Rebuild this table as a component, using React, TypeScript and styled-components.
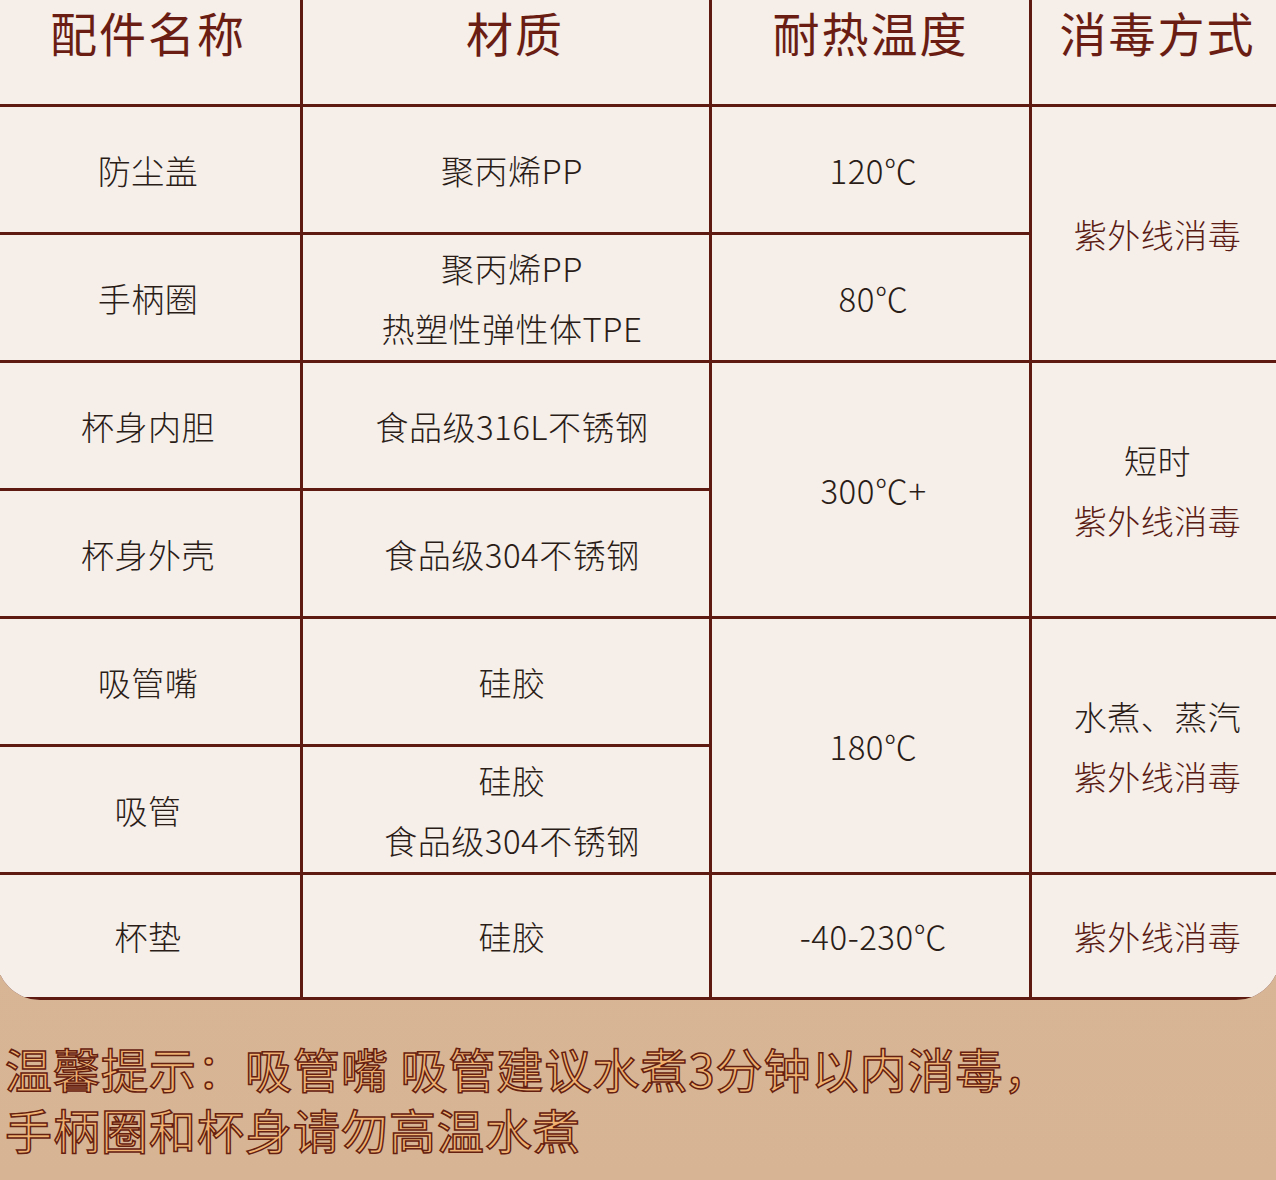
import React from "react";
import styled, { createGlobalStyle } from "styled-components";

const Global = createGlobalStyle`
  html, body { margin: 0; padding: 0; }
  body {
    background: #d8b796;
    font-family: "Noto Sans CJK SC", "Noto Sans", sans-serif;
  }
`;

const Page = styled.div`
  width: 1276px;
  height: 1180px;
  overflow: hidden;
  background: linear-gradient(180deg, #d9b999 0%, #d7b594 100%);
`;

const Table = styled.div`
  margin-left: -4px;
  width: 1284px;
  display: grid;
  grid-template-columns: 304px 406px 317px 251px;
  grid-template-rows: 104px repeat(6, 125px) 122px;
  gap: 3px;
  background: #5e1a10;
  padding-bottom: 3px;
  border-radius: 0 0 44px 44px;
  overflow: hidden;
`;

const Cell = styled.div<{ $col: number; $row: number; $span?: number; $shift?: number }>`
  grid-column: ${(p) => p.$col};
  grid-row: ${(p) => p.$row} / span ${(p) => p.$span ?? 1};
  background: #f5eee9;
  display: flex;
  flex-direction: column;
  align-items: center;
  justify-content: center;
  text-align: center;
  padding-left: ${(p) => p.$shift ?? 0}px;
  color: #2a1c17;
  font-size: 33px;
  font-weight: 300;
  line-height: 60px;
  letter-spacing: 0.5px;
`;

const HeadCell = styled(Cell)`
  justify-content: flex-start;
  padding-top: 4px;
  color: #6a1d13;
  font-size: 47px;
  font-weight: 400;
  line-height: 56px;
  letter-spacing: 2px;
`;

const Red = styled.span`
  color: #5a1c14;
`;

const Tips = styled.div`
  padding: 37px 0 0 5px;
  font-size: 47px;
  line-height: 61px;
  font-weight: 400;
  color: #f0b372;
  -webkit-text-stroke: 1.5px #66200f;
  letter-spacing: 1px;
`;

const rows: { name: string[]; mat: string[] }[] = [
  { name: ["防尘盖"], mat: ["聚丙烯PP"] },
  { name: ["手柄圈"], mat: ["聚丙烯PP", "热塑性弹性体TPE"] },
  { name: ["杯身内胆"], mat: ["食品级316L不锈钢"] },
  { name: ["杯身外壳"], mat: ["食品级304不锈钢"] },
  { name: ["吸管嘴"], mat: ["硅胶"] },
  { name: ["吸管"], mat: ["硅胶", "食品级304不锈钢"] },
  { name: ["杯垫"], mat: ["硅胶"] },
];

const temps: { row: number; span: number; text: string }[] = [
  { row: 2, span: 1, text: "120℃" },
  { row: 3, span: 1, text: "80℃" },
  { row: 4, span: 2, text: "300℃+" },
  { row: 6, span: 2, text: "180℃" },
  { row: 8, span: 1, text: "-40-230℃" },
];

const methods: { row: number; span: number; lines: React.ReactNode[] }[] = [
  { row: 2, span: 2, lines: [<Red key="a">紫外线消毒</Red>] },
  { row: 4, span: 2, lines: ["短时", <Red key="b">紫外线消毒</Red>] },
  { row: 6, span: 2, lines: ["水煮、蒸汽", <Red key="c">紫外线消毒</Red>] },
  { row: 8, span: 1, lines: [<Red key="d">紫外线消毒</Red>] },
];

export default function App() {
  return (
    <Page>
      <Global />
      <Table>
        <HeadCell $col={1} $row={1}>配件名称</HeadCell>
        <HeadCell $col={2} $row={1} $shift={18}>材质</HeadCell>
        <HeadCell $col={3} $row={1}>耐热温度</HeadCell>
        <HeadCell $col={4} $row={1}>消毒方式</HeadCell>
        {rows.map((r, i) => (
          <React.Fragment key={i}>
            <Cell $col={1} $row={i + 2}>
              {r.name.map((l) => (
                <div key={l}>{l}</div>
              ))}
            </Cell>
            <Cell $col={2} $row={i + 2} $shift={12}>
              {r.mat.map((l) => (
                <div key={l}>{l}</div>
              ))}
            </Cell>
          </React.Fragment>
        ))}
        {temps.map((t) => (
          <Cell key={t.row} $col={3} $row={t.row} $span={t.span} $shift={6}>
            {t.text}
          </Cell>
        ))}
        {methods.map((m) => (
          <Cell key={m.row} $col={4} $row={m.row} $span={m.span}>
            {m.lines.map((l, j) => (
              <div key={j}>{l}</div>
            ))}
          </Cell>
        ))}
      </Table>
      <Tips>
        <div>温馨提示：吸管嘴 吸管建议水煮3分钟以内消毒，</div>
        <div>手柄圈和杯身请勿高温水煮</div>
      </Tips>
    </Page>
  );
}
